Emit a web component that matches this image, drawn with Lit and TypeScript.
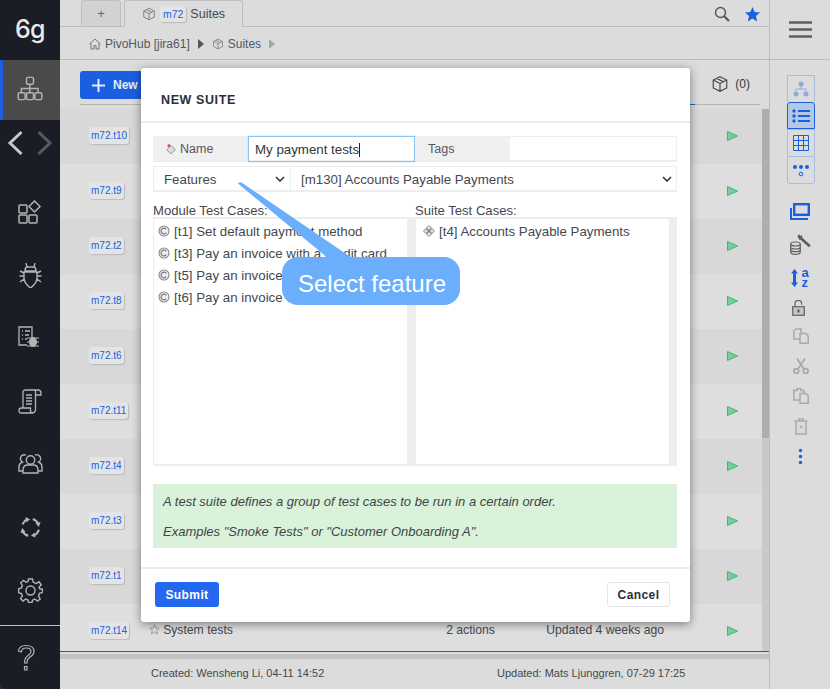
import { LitElement, html, css, svg } from 'lit';
import { customElement } from 'lit/decorators.js';

const cube = svg`<path d="M8 1.5 14 4.5V11.5L8 14.5 2 11.5V4.5ZM2 4.5 8 7.5 14 4.5M8 7.5V14.5M5 3 11 6" fill="none" stroke="currentColor" stroke-width="1"/>`;
const caseIcon = svg`<circle cx="6" cy="6" r="5" fill="#eee" stroke="#888" stroke-width="1.1"/><path d="M8.2 4.4A2.8 2.8 0 1 0 8.2 7.6" fill="none" stroke="#777" stroke-width="1.2"/>`;
const suiteIcon = svg`<path d="M6 .5 11.5 6 6 11.5 .5 6Z" fill="#e6e6e6" stroke="#888" stroke-width="1"/><path d="M3.5 3.5 8.5 8.5M8.5 3.5 3.5 8.5" stroke="#777" stroke-width="1.2"/>`;
const play = svg`<path d="M.5.5 10.5 5 .5 9.5Z" fill="#7ccba2" stroke="#2fbf71" stroke-width="1"/>`;

const hierarchy = svg`<g fill="none" stroke="currentColor" stroke-width="1.05"><rect x="6.7" y="1" width="5" height="5" rx="1"/><path d="M3 12V9H15V12M9 6V12"/><rect x=".7" y="12" width="5" height="5" rx="1"/><rect x="6.7" y="12" width="5" height="5" rx="1"/><rect x="12.7" y="12" width="5" height="5" rx="1"/></g>`;
const sideIcons = [
  svg`<g fill="none" stroke="currentColor" stroke-width="1.5"><rect x="1" y="5" width="8" height="8" rx="1"/><rect x="1" y="15" width="8" height="8" rx="1"/><rect x="11" y="15" width="8" height="8" rx="1"/><path d="M16.5 1 22 6.5 16.5 12 11 6.5Z"/></g>`,
  svg`<g fill="none" stroke="currentColor" stroke-width="1.4"><path d="M8 0 9 4H16L17 0M7 8Q7 4.5 9 4H16Q18 4.5 18 8ZM6 9H19V15Q19 20 12.5 25 6 20 6 15ZM6 10 2 8M6 13H1.5M6 16 2 19M19 10 23 8M19 13H23.5M19 16 23 19"/></g>`,
  svg`<g fill="none" stroke="currentColor" stroke-width="1.3"><path d="M14 13V1H1V19H9"/><path d="M4 5H5M7 5H12M4 9H5M7 9H11M4 13H5M7 13H9"/></g><ellipse cx="15" cy="16" rx="4" ry="5" fill="currentColor"/><path d="M9 12 21 12M9 16H21M9 20 21 20" stroke="currentColor" stroke-width="1"/>`,
  svg`<g fill="none" stroke="currentColor" stroke-width="1.3"><path d="M5 19V3Q5 1 8 1H20Q23 1 23 4V6H17M16 1Q18 1 17.5 4V21Q17 24 14 24H3Q1 24 1 21.5 1 19 3.5 19H12.5V21.5Q12.5 24 15 24"/></g><path d="M8 6H14M8 9H14M8 12H14M8 15H14" stroke="currentColor" stroke-width="1.7"/>`,
  svg`<g fill="none" stroke="currentColor" stroke-width="1.4"><circle cx="12.5" cy="8" r="4.2"/><path d="M5 21V18Q5 13.5 9 13H16Q20 13.5 20 18V21Z"/><path d="M8 3.2A3.5 3.5 0 0 0 4.5 10Q1 11.5 1 15V19H5M17 3.2A3.5 3.5 0 0 1 20.5 10Q24 11.5 24 15V19H20"/></g>`,
  svg`<g transform="translate(1 1) scale(.92)"><g fill="none" stroke="currentColor" stroke-width="2.3"><path d="M3.8 9A9.5 9.5 0 0 1 9 3.6M15 3.3A9.5 9.5 0 0 1 21 9M21.6 15A9.5 9.5 0 0 1 16 21.2M10 21.6A9.5 9.5 0 0 1 3.6 16"/></g><g fill="currentColor"><path d="M7 1 12 3.5 8 7ZM23.5 6.5 21.5 12 18 8ZM18 23.5 13 21.5 17 18ZM1.5 18.5 3.5 13 7 17Z"/></g></g>`,
  svg`<g fill="none" stroke="currentColor" stroke-width="1.4"><circle cx="12.5" cy="12.5" r="4.5"/><path d="M10.5 1H14.5L15.3 4.3 18.2 5.5 21 3.8 23.2 6.8 21 9.3 22 11H24.5V14.5L21.5 15.4 20.5 18.2 22.2 21 19.4 23.2 17 21 14.5 22.2 14 24.5H10.5L10 22 7.7 21 5 23 2.6 20.7 4.4 18 3.4 15.6 .6 14.6V10.8L3.4 10 4.4 7.5 2.8 4.8 5.5 2.5 8 4.3 10 3.5Z"/></g>`,
];
// [width, height, content], each drawn 1:1 in its own pixel box
const toolIcons: [number, number, unknown][] = [
  [20, 17, svg`<g fill="none" stroke="#1a5fe0"><path d="M1 5V16H18" stroke-width="2"/><rect x="4.2" y="1.2" width="14.6" height="10.6" stroke-width="2.4"/></g>`],
  [21, 21, svg`<g fill="none" stroke="#5c5f66" stroke-width="1.2"><ellipse cx="5.5" cy="10" rx="4.8" ry="2"/><path d="M.7 10V18Q.7 20.4 5.5 20.4 10.3 20.4 10.3 18V10M.7 13Q.7 15 5.5 15 10.3 15 10.3 13M.7 15.7Q.7 17.7 5.5 17.7 10.3 17.7 10.3 15.7"/></g><path d="M10 3.5 19 11.5" stroke="#5c5f66" stroke-width="2.8" stroke-linecap="round"/><path d="M7.5 2.5 9 0 10.5 2 12 1 12.5 5 9.5 6Z" fill="#5c5f66"/>`],
];

@customElement('app-root')
export class AppRoot extends LitElement {
  static styles = css`
    :host {
      display: flex;
      position: relative;
      width: 830px;
      height: 689px;
      overflow: hidden;
      background: #3a2040;
      font-family: "Liberation Sans", Arial, sans-serif;
      font-size: 12px;
      color: #33363b;
    }
    svg { display: block; }

    .sidebar {
      width: 60px;
      flex: none;
      display: flex;
      flex-direction: column;
      background: #1a1d25;
      color: #b4b4b4;
      border-bottom-left-radius: 7px;
    }
    .logo {
      height: 60px;
      display: flex;
      align-items: center;
      justify-content: center;
      color: #e8e8e8;
      font-family: Inter, sans-serif;
      font-weight: 500;
      font-size: 25px;
      letter-spacing: -0.5px;
      padding-bottom: 2px;
      box-sizing: border-box;
    }
    .active {
      height: 60px;
      display: flex;
      align-items: center;
      justify-content: center;
      background: #4a4a4a;
      border-left: 3px solid #1a5fe0;
      box-sizing: border-box;
      padding: 0 4px 3px 0;
    }
    .arrows {
      height: 46px;
      margin-bottom: 15px;
      display: flex;
      align-items: center;
      justify-content: center;
      gap: 14px;
    }
    .nav {
      height: 63px;
      display: flex;
      align-items: center;
      justify-content: center;
    }
    .help {
      margin-top: 3px;
      flex: 1;
      border-top: 1px solid #c4c4c4;
      display: flex;
      align-items: center;
      justify-content: center;
      padding-right: 8px;
    }

    .main {
      flex: 1;
      display: flex;
      flex-direction: column;
      min-width: 0;
      background: #dcdcdc;
    }
    .tabbar {
      height: 27px;
      flex: none;
      box-sizing: border-box;
      border-bottom: 1px solid #b9bdbd;
      display: flex;
      align-items: flex-end;
      gap: 3px;
      padding-left: 21px;
    }
    .tab {
      box-sizing: border-box;
      height: 26px;
      border: 1px solid #bcc0c0;
      border-bottom: none;
      border-radius: 3px 3px 0 0;
      display: flex;
      align-items: center;
      justify-content: center;
    }
    .tab.add { width: 40px; background: #d2d2d2; color: #666; font-size: 13px; }
    .tab.cur {
      width: 119px;
      height: 27px;
      margin-bottom: -1px;
      background: #dcdcdc;
      font-size: 12.5px;
      gap: 4px;
      color: #45484d;
    }
    .tabtools { margin-left: auto; display: flex; align-items: center; gap: 15px; padding: 0 9px 4px 0; }
    .mini {
      background: #e4e4e4;
      border-radius: 3px;
      box-shadow: 1px 1px 1px #bbb;
      color: #1a5fe0;
      font-size: 10.5px;
      padding: 2px 3px;
    }
    .crumbs {
      height: 33px;
      flex: none;
      box-sizing: border-box;
      border-bottom: 1px solid #b9bdbd;
      display: flex;
      align-items: center;
      gap: 4px;
      padding: 1px 0 0 29px;
      color: #55585c;
      font-size: 12px;
    }
    .tri { width: 0; height: 0; border-left: 6px solid #555; border-top: 5.5px solid transparent; border-bottom: 5.5px solid transparent; margin: 0 4px; }
    .tri.dim { border-left-color: #a8a8a8; }
    .toolbar {
      height: 49px;
      flex: none;
      position: relative;
      display: flex;
      align-items: flex-start;
      padding: 11px 19px 0 20px;
      box-sizing: border-box;
    }
    .toolbar::after {
      content: "";
      position: absolute;
      left: 20px;
      right: 9px;
      bottom: 4px;
      height: 1px;
      background: #b4b4b4;
    }
    .toolbar::before {
      content: "";
      position: absolute;
      left: 560px;
      width: 75px;
      bottom: 4px;
      height: 1px;
      background: #1a5fe0;
      z-index: 1;
    }
    .new {
      height: 28px;
      width: 80px;
      box-sizing: border-box;
      display: flex;
      align-items: center;
      gap: 8px;
      padding-left: 12px;
      background: #1a5fe0;
      border-radius: 3px;
      color: #e6ecf6;
      font-weight: 700;
      font-size: 12px;
    }
    .count { margin-left: auto; display: flex; align-items: center; gap: 6px; margin-top: 4px; color: #33363b; }
    .listwrap { flex: 1; display: flex; min-height: 0; overflow: hidden; }
    .list { flex: 1; min-width: 0; }
    .scroll { width: 7px; background: #c9c9c9; }
    .thumb { height: 329px; background: #aeaeae; }
    .row {
      height: 55px;
      position: relative;
      display: flex;
      align-items: center;
      background: #dedede;
      padding: 0 0 2px 29px;
      box-sizing: border-box;
      color: #45484d;
      font-size: 12.2px;
    }
    .row:nth-child(odd) { background: #d8d8d8; }
    .pill {
      flex: none;
      background: #e4e4e4;
      border-radius: 3px;
      box-shadow: 1px 1px 1px #bbb;
      color: #1a5fe0;
      font-size: 10px;
      padding: 3px 2px;
    }
    .name { margin: 0 0 2px 20px; display: flex; align-items: center; gap: 3px; width: 297px; }
    .actions { width: 100px; margin-bottom: 2px; }
    .updated { margin-bottom: 2px; }
    .playbtn { position: absolute; left: 667px; top: 22px; }
    .bottom { flex: none; }
    .line1 { height: 3px; border-top: 1px solid #555; background: #dcdcdc; box-sizing: border-box; }
    .line2 { height: 5px; background: #c2c2c2; }
    .footer {
      height: 30px;
      box-sizing: border-box;
      display: flex;
      align-items: center;
      font-size: 11px;
      color: #45484d;
      padding: 0 0 2px 91px;
    }
    .footer span:first-child { width: 346px; }

    .right {
      width: 61px;
      flex: none;
      box-sizing: border-box;
      border-left: 1px solid #b9bdbd;
      background: #dcdcdc;
      display: flex;
      flex-direction: column;
      align-items: center;
    }
    .burger { height: 60px; width: 100%; flex: none; display: flex; align-items: center; justify-content: center; border-bottom: 1px solid #b9bdbd; box-sizing: border-box; }
    .views { margin: 15px 0 0 2px; display: flex; flex-direction: column; width: 28px; }
    .view { height: 27px; box-sizing: border-box; border: 1px solid #a9bedd; border-bottom: none; display: flex; align-items: center; justify-content: center; }
    .view.on { background: #b4c8e6; border: 1px solid #1a5fe0; border-radius: 3px 3px 0 0; }
    .view.last { border-bottom: 1px solid #a9bedd; border-radius: 0 0 3px 3px; height: 28px; }
    .tools { margin-top: 11px; display: flex; flex-direction: column; align-items: center; width: 100%; }
    .tool { height: 30px; display: flex; align-items: center; justify-content: center; }
    .tool.tall { height: 33px; }
    .tool.lock { height: 27px; margin-left: -3px; }
    .tool.faded { margin-left: 1px; }
    .sort { gap: 3px; }
    .az {
      display: flex;
      flex-direction: column;
      color: #1a5fe0;
      font-weight: 700;
      font-size: 13px;
      line-height: 9.5px;
    }

    .modal {
      position: absolute;
      z-index: 2;
      left: 141px;
      top: 68px;
      width: 549px;
      height: 554px;
      background: #fff;
      border-radius: 3px;
      box-shadow: 0 2px 10px rgba(0, 0, 0, 0.45);
      display: flex;
      flex-direction: column;
    }
    .m-head {
      height: 55px;
      box-sizing: border-box;
      flex: none;
      display: flex;
      align-items: center;
      padding: 10px 0 0 20px;
      border-bottom: 2px solid #ebeeee;
      font-weight: 700;
      font-size: 12.5px;
      letter-spacing: 0.6px;
      color: #2c3038;
    }
    .m-body { flex: 1; padding: 13px 13px 0 12px; display: flex; flex-direction: column; min-height: 0; }
    .fields {
      display: grid;
      grid-template-columns: 94px 167px 95px 1fr;
      height: 26px;
      flex: none;
      box-sizing: border-box;
      border: 1px solid #eee;
      border-width: 1px 1px 2px 1px;
    }
    .label {
      background: #f0f0f0;
      display: flex;
      align-items: center;
      gap: 4px;
      padding: 1px 0 0 12px;
      color: #55585c;
      font-size: 12.5px;
    }
    .label.tags { padding: 0 0 0 13px; }
    .input {
      margin: -1px 0 -2px;
      box-sizing: border-box;
      border: 1px solid #8cc4f0;
      box-shadow: 0 0 2px #b8dcf8;
      display: flex;
      align-items: center;
      padding: 1px 0 0 6px;
      font-size: 13.3px;
      color: #33363b;
    }
    .caret { width: 1px; height: 14px; background: #222; }
    .selects {
      margin-top: 4px;
      display: grid;
      grid-template-columns: 136px 1fr;
      height: 26px;
      flex: none;
      box-sizing: border-box;
      border: 1px solid #eee;
      border-width: 1px 1px 2px 1px;
      font-size: 13.3px;
      color: #45484d;
    }
    .sel { display: flex; align-items: center; justify-content: space-between; padding: 1px 4px 0 10px; }
    .sel:first-child { padding-right: 5px; }
    .sel + .sel { border-left: 1px solid #eee; }
    .cols { margin-top: 11px; display: grid; grid-template-columns: 262px 1fr; font-size: 13.1px; color: #45484d; line-height: 14px; }
    .cols span { position: relative; top: 1px; }
    .boxes { display: grid; grid-template-columns: 262px 1fr; height: 249px; flex: none; margin-bottom: 18px; }
    .box { display: flex; border: solid #eee; border-width: 2px 0 2px 1px; }
    .items { flex: 1; padding: 1px 0 0 4px; }
    .box.suite .items { padding-left: 7px; }
    .bar { width: 8px; background: #eee; }
    .item { height: 22px; display: flex; align-items: center; gap: 4px; font-size: 13.3px; color: #45484d; white-space: nowrap; }
    .info {
      height: 64px;
      box-sizing: border-box;
      background: #d9f2d9;
      padding: 10px 10px;
      font-style: italic;
      font-size: 13px;
      color: #3f4448;
      display: flex;
      flex-direction: column;
      gap: 15px;
      line-height: 15px;
    }
    .m-foot {
      height: 55px;
      flex: none;
      box-sizing: border-box;
      border-top: 2px solid #ebeeee;
      display: flex;
      align-items: flex-start;
      justify-content: space-between;
      padding: 13px 20px 0 14px;
    }
    .btn {
      height: 25px;
      box-sizing: border-box;
      display: flex;
      align-items: center;
      justify-content: center;
      border-radius: 3px;
      font-weight: 700;
      font-size: 12px;
      letter-spacing: 0.4px;
    }
    .submit { width: 64px; background: #2468f2; color: #fff; }
    .cancel { width: 63px; background: #fff; color: #2c3038; border: 1px solid #e3e6e8; }

    .tail { position: absolute; z-index: 3; left: 235px; top: 180px; }
    .bubble {
      position: absolute;
      z-index: 3;
      left: 282px;
      top: 257px;
      width: 178px;
      height: 48px;
      box-sizing: border-box;
      padding: 6px 0 0 2px;
      border-radius: 16px;
      background: #6aaefc;
      color: #fff;
      font-size: 24px;
      display: flex;
      align-items: center;
      justify-content: center;
    }
  `;

  render() {
    const rows = ['t10', 't9', 't2', 't8', 't6', 't11', 't4', 't3', 't1', 't14'];
    const left = [
      '[t1] Set default payment method',
      '[t3] Pay an invoice with a credit card',
      '[t5] Pay an invoice with a bank account',
      '[t6] Pay an invoice with a wire',
    ];
    return html`
      <aside class="sidebar">
        <div class="logo">6g</div>
        <div class="active">
          <svg width="26" height="25" viewBox="0 0 18.4 18">${hierarchy}</svg>
        </div>
        <div class="arrows">
          <svg width="16" height="26" viewBox="0 0 16 26"><path d="M14.5 2 3 13 14.5 24" fill="none" stroke="#c8c8c8" stroke-width="3"/></svg>
          <svg width="16" height="26" viewBox="0 0 16 26"><path d="M1.5 2 13 13 1.5 24" fill="none" stroke="#5a5a5a" stroke-width="3"/></svg>
        </div>
        ${sideIcons.map(
          (i) => html`<div class="nav"><svg width="25" height="25" viewBox="0 0 25 25">${i}</svg></div>`
        )}
        <div class="help">
          <svg width="20" height="28" viewBox="0 0 20 28"><path d="M2.5 7Q3 1.5 10 1.5 18 1.5 18 7.5 18 10.5 14 13 11 15 11 19H8.5Q8.5 14 12 11.5 15 9.5 15 7.5 15 4 10 4 6 4 5.3 8Z M8.5 22.5H11V26H8.5Z" fill="none" stroke="#b4b4b4" stroke-width="1.2"/></svg>
        </div>
      </aside>

      <div class="main">
        <div class="tabbar">
          <div class="tab add">+</div>
          <div class="tab cur">
            <svg width="14" height="14" viewBox="0 0 16 16" style="color:#777">${cube}</svg>
            <span class="mini">m72</span> Suites
          </div>
          <div class="tabtools">
            <svg width="16" height="16" viewBox="0 0 16 16"><circle cx="6.5" cy="6.5" r="5" fill="none" stroke="#555" stroke-width="1.4"/><path d="M10 10 15 15" stroke="#555" stroke-width="2.2"/></svg>
            <svg width="15" height="15" viewBox="0 0 15 15"><path d="M7.5 0 9.6 5 15 5.5 10.9 9 12.2 14.5 7.5 11.6 2.8 14.5 4.1 9 0 5.5 5.4 5Z" fill="#1a5fe0"/></svg>
          </div>
        </div>
        <div class="crumbs">
          <svg width="12" height="12" viewBox="0 0 12 12"><path d="M.5 6 6 1 11.5 6M2 5V11H5V7.5H7V11H10V5" fill="none" stroke="#777"/></svg>
          <span>PivoHub [jira61]</span>
          <i class="tri"></i>
          <svg width="12" height="12" viewBox="0 0 16 16" style="color:#777">${cube}</svg>
          <span>Suites</span>
          <i class="tri dim"></i>
        </div>
        <div class="toolbar">
          <div class="new">
            <svg width="13" height="13" viewBox="0 0 13 13"><path d="M6.5 0V13M0 6.5H13" stroke="#e6ecf6" stroke-width="2"/></svg>
            New
          </div>
          <div class="count">
            <svg width="18" height="18" viewBox="0 0 16 16" style="color:#444">${cube}</svg>
            <span>(0)</span>
          </div>
        </div>
        <div class="listwrap">
          <div class="list">
            ${rows.map(
              (r) => html`<div class="row">
                <span class="pill">m72.${r}</span>
                ${r === 't14'
                  ? html`<span class="name">
                        <svg width="11" height="11" viewBox="0 0 15 15"><path d="M7.5 1 9.3 5.4 14 5.8 10.5 8.9 11.6 13.6 7.5 11.1 3.4 13.6 4.5 8.9 1 5.8 5.7 5.4Z" fill="none" stroke="#888"/></svg>
                        System tests
                      </span>
                      <span class="actions">2 actions</span>
                      <span class="updated">Updated 4 weeks ago</span>`
                  : ''}
                <svg class="playbtn" width="11" height="10" viewBox="0 0 11 10">${play}</svg>
              </div>`
            )}
          </div>
          <div class="scroll"><div class="thumb"></div></div>
        </div>
        <div class="bottom">
          <div class="line1"></div>
          <div class="line2"></div>
          <div class="footer">
            <span>Created: Wensheng Li, 04-11 14:52</span>
            <span>Updated: Mats Ljunggren, 07-29 17:25</span>
          </div>
        </div>
      </div>

      <aside class="right">
        <div class="burger">
          <svg width="23" height="17" viewBox="0 0 23 17"><path d="M0 1.5H23M0 8.5H23M0 15.5H23" stroke="#5c5f66" stroke-width="2.4"/></svg>
        </div>
        <div class="views">
          <div class="view">
            <svg width="16" height="16" viewBox="0 0 16 16"><g fill="#8cabdc"><circle cx="8" cy="3" r="2.5"/><circle cx="3" cy="13" r="2.5"/><circle cx="13" cy="13" r="2.5"/></g><path d="M8 5V8M3 10V8H13V10" stroke="#8cabdc" fill="none"/></svg>
          </div>
          <div class="view on">
            <svg width="18" height="14" viewBox="0 0 18 14"><g fill="#1a5fe0"><circle cx="2" cy="2" r="1.7"/><circle cx="2" cy="7" r="1.7"/><circle cx="2" cy="12" r="1.7"/><rect x="6" y="1" width="12" height="2"/><rect x="6" y="6" width="12" height="2"/><rect x="6" y="11" width="12" height="2"/></g></svg>
          </div>
          <div class="view">
            <svg width="16" height="16" viewBox="0 0 16 16"><path d="M.5.5H15.5V15.5H.5ZM.5 5.5H15.5M.5 10.5H15.5M5.5.5V15.5M10.5.5V15.5" fill="none" stroke="#1a5fe0"/></svg>
          </div>
          <div class="view last">
            <svg width="16" height="13" viewBox="0 0 16 13"><g fill="#1a5fe0"><circle cx="2" cy="3" r="2"/><circle cx="8" cy="3" r="2"/><circle cx="14" cy="3" r="2"/></g><circle cx="8" cy="10" r="1.8" fill="none" stroke="#1a5fe0"/></svg>
          </div>
        </div>
        <div class="tools">
          ${toolIcons.map(
            ([w, h, i]) => html`<div class="tool tall"><svg width=${w} height=${h} viewBox="0 0 ${w} ${h}">${i}</svg></div>`
          )}
          <div class="tool tall sort">
            <svg width="7" height="18" viewBox="0 0 7 18"><path d="M3.5 0 7 4.5H5V13.5H7L3.5 18 0 13.5H2V4.5H0Z" fill="#1a5fe0"/></svg>
            <div class="az"><span>a</span><span>z</span></div>
          </div>
          <div class="tool lock">
            <svg width="13" height="16" viewBox="0 0 13 16"><g fill="none" stroke="#66696e" stroke-width="1.3"><rect x=".7" y="6.7" width="11.6" height="8.6" fill="#c6c6c6"/><path d="M3 6.7V3.6A3.3 3.3 0 0 1 9.6 3.6V4.8"/></g><rect x="5.5" y="9.5" width="2" height="3" fill="#555"/></svg>
          </div>
          <div class="tool faded">
            <svg width="16" height="16" viewBox="0 0 16 16"><g fill="#dcdcdc" stroke="#a9a9a9" stroke-width="1.5"><path d="M.8 3V11H8V1H3Z"/><path d="M7 5.5H13L15.2 8V15.2H7Z"/></g></svg>
          </div>
          <div class="tool faded">
            <svg width="16" height="16" viewBox="0 0 16 16"><g fill="none" stroke="#a9a9a9" stroke-width="1.7"><circle cx="3.3" cy="13" r="2.4"/><circle cx="12.7" cy="13" r="2.4"/><path d="M5 11 12 .5M11 11 4 .5"/></g></svg>
          </div>
          <div class="tool faded">
            <svg width="16" height="16" viewBox="0 0 16 16"><g fill="#dcdcdc" stroke="#a9a9a9" stroke-width="1.5"><path d="M.8 2.5H4V.8H8V2.5H11V12H.8Z"/><path d="M7 5.5H13L15.2 8V15.2H7Z"/></g></svg>
          </div>
          <div class="tool faded">
            <svg width="14" height="17" viewBox="0 0 14 17"><g fill="none" stroke="#a9a9a9" stroke-width="1.5"><path d="M.5 3H13.5M5 3V1H9V3M2 3V16H12V3"/><path d="M5.5 7.5 8.5 10.5M8.5 7.5 5.5 10.5" stroke-width="1"/></g></svg>
          </div>
          <div class="tool">
            <svg width="5" height="17" viewBox="0 0 5 17"><g fill="#1a5fe0"><circle cx="2.5" cy="2.5" r="1.7"/><circle cx="2.5" cy="8.5" r="1.7"/><circle cx="2.5" cy="14.5" r="1.7"/></g></svg>
          </div>
        </div>
      </aside>

      <div class="modal">
        <div class="m-head">NEW SUITE</div>
        <div class="m-body">
          <div class="fields">
            <div class="label">
              <svg width="10" height="12" viewBox="0 0 14 14"><path d="M7 2 13 8 7 14 1 8Z" fill="#ddd" stroke="#777"/><circle cx="4" cy="2.5" r="2" fill="#e0455a"/></svg>
              Name
            </div>
            <div class="input">My payment tests<span class="caret"></span></div>
            <div class="label tags">Tags</div>
            <div></div>
          </div>
          <div class="selects">
            <div class="sel">
              Features
              <svg width="10" height="6" viewBox="0 0 10 6"><path d="M1 1 5 5 9 1" fill="none" stroke="#333" stroke-width="1.6"/></svg>
            </div>
            <div class="sel">
              [m130] Accounts Payable Payments
              <svg width="10" height="6" viewBox="0 0 10 6"><path d="M1 1 5 5 9 1" fill="none" stroke="#333" stroke-width="1.6"/></svg>
            </div>
          </div>
          <div class="cols">
            <span>Module Test Cases:</span>
            <span>Suite Test Cases:</span>
          </div>
          <div class="boxes">
            <div class="box">
              <div class="items">
                ${left.map(
                  (t) => html`<div class="item"><svg width="12" height="12" viewBox="0 0 12 12">${caseIcon}</svg>${t}</div>`
                )}
              </div>
              <div class="bar"></div>
            </div>
            <div class="box suite">
              <div class="items">
                <div class="item"><svg width="12" height="12" viewBox="0 0 12 12">${suiteIcon}</svg>[t4] Accounts Payable Payments</div>
              </div>
              <div class="bar"></div>
            </div>
          </div>
          <div class="info">
            <span>A test suite defines a group of test cases to be run in a certain order.</span>
            <span>Examples "Smoke Tests" or "Customer Onboarding A".</span>
          </div>
        </div>
        <div class="m-foot">
          <div class="btn submit">Submit</div>
          <div class="btn cancel">Cancel</div>
        </div>
      </div>

      <svg class="tail" width="120" height="90" viewBox="0 0 120 90"><path d="M3 3.5Q4 1.5 6.5 2.5L117 78 100 84Z" fill="#6aaefc"/></svg>
      <div class="bubble">Select feature</div>
    `;
  }
}
